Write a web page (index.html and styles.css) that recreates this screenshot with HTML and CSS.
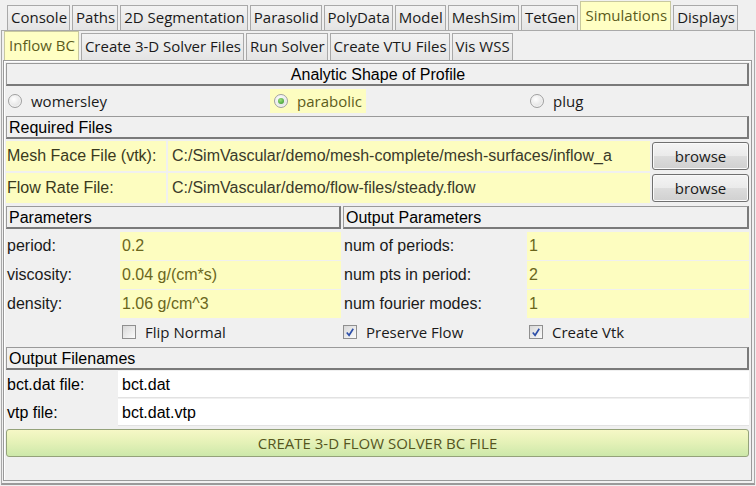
FILE: index.html
```html
<!DOCTYPE html>
<html>
<head>
<meta charset="utf-8">
<link rel="stylesheet" href="styles.css">
</head>
<body>
<div class="app">
  <div class="tabs main">
    <div class="tab">Console</div>
    <div class="tab">Paths</div>
    <div class="tab">2D Segmentation</div>
    <div class="tab">Parasolid</div>
    <div class="tab">PolyData</div>
    <div class="tab">Model</div>
    <div class="tab">MeshSim</div>
    <div class="tab">TetGen</div>
    <div class="tab sel">Simulations</div>
    <div class="tab">Displays</div>
  </div>
  <div class="panel">
    <div class="tabs sub">
      <div class="tab sel">Inflow BC</div>
      <div class="tab">Create 3-D Solver Files</div>
      <div class="tab">Run Solver</div>
      <div class="tab">Create VTU Files</div>
      <div class="tab">Vis WSS</div>
    </div>
    <div class="frame">
      <div class="hdr center">Analytic Shape of Profile</div>
      <div class="radios">
        <div class="opt"><span class="radio"></span>womersley</div>
        <div class="opt on"><span class="radio checked"></span>parabolic</div>
        <div class="opt"><span class="radio"></span>plug</div>
      </div>
      <div class="hdr">Required Files</div>
      <div class="filerow">
        <div class="flabel">Mesh Face File (vtk):</div>
        <div class="fvalue">C:/SimVascular/demo/mesh-complete/mesh-surfaces/inflow_a</div>
        <div class="btn">browse</div>
      </div>
      <div class="filerow">
        <div class="flabel">Flow Rate File:</div>
        <div class="fvalue">C:/SimVascular/demo/flow-files/steady.flow</div>
        <div class="btn">browse</div>
      </div>
      <div class="params">
        <div class="hdr span2">Parameters</div>
        <div class="hdr span2 rhdr">Output Parameters</div>
        <div class="plabel">period:</div><div class="pval">0.2</div>
        <div class="plabel rl">num of periods:</div><div class="pval">1</div>
        <div class="plabel">viscosity:</div><div class="pval">0.04 g/(cm*s)</div>
        <div class="plabel rl">num pts in period:</div><div class="pval">2</div>
        <div class="plabel">density:</div><div class="pval">1.06 g/cm^3</div>
        <div class="plabel rl">num fourier modes:</div><div class="pval">1</div>
        <div></div>
        <div class="chk"><span class="box"></span>Flip Normal</div>
        <div class="chk"><span class="box checked"><svg viewBox="0 0 13 13" width="13" height="13"><path d="M3 6.5 L5.5 9.5 L10 2.5" fill="none" stroke="#2d4fa8" stroke-width="1.8"/></svg></span>Preserve Flow</div>
        <div class="chk"><span class="box checked"><svg viewBox="0 0 13 13" width="13" height="13"><path d="M3 6.5 L5.5 9.5 L10 2.5" fill="none" stroke="#2d4fa8" stroke-width="1.8"/></svg></span>Create Vtk</div>
      </div>
      <div class="hdr">Output Filenames</div>
      <div class="outs">
        <div class="olabel">bct.dat file:</div><div class="oval">bct.dat</div>
        <div class="olabel">vtp file:</div><div class="oval">bct.dat.vtp</div>
      </div>
      <div class="create">CREATE 3-D FLOW SOLVER BC FILE</div>
    </div>
  </div>
</div>
</body>
</html>
```
FILE: styles.css
```css
* { box-sizing: border-box; }
html, body { margin: 0; padding: 0; }
body {
  width: 756px; height: 486px; overflow: hidden;
  background: #f0f0f0;
  font-family: "Liberation Sans", Arial, sans-serif;
  font-size: 16px; color: #000;
}
.app { display: flex; flex-direction: column; height: 486px; }
.tabs { display: flex; align-items: flex-end; gap: 2px; }
.tabs.main { padding: 0 0 0 7px; height: 30px; }
.tab {
  font-family: "Open Sans", "Noto Sans", sans-serif;
  font-size: 15px; color: #1a1a1a;
  height: 25px; line-height: 23px; padding: 0 2px 0 3px;
  border: 1px solid #a9a9a9; border-bottom: none;
  background: linear-gradient(#f3f3f3, #e4e4e4);
  white-space: nowrap;
}
.tab.sel {
  height: 29px; line-height: 27px;
  background: #ffffc4; color: #5c5c1c; padding: 0 3px 0 4px;
  border-color: #c8c8a0;
}
.panel {
  flex: 1; display: flex; flex-direction: column;
  border: 1px solid #a9a9a9; border-bottom: 2px solid #9a9a9a;
  margin: 0 1px 1px 1px; background: #f0f0f0;
}
.tabs.sub { padding: 0 0 0 2px; height: 29px; }
.tabs.sub .tab { height: 27px; line-height: 25px; }
.tabs.sub .tab.sel { height: 29px; line-height: 27px; }
.frame {
  flex: 1; margin: 0 2px 2px 1px;
  border: 1px solid #9a9a9a; box-shadow: inset 1px 1px 0 #fff;
  padding: 2px 2px 2px 2px;
  display: flex; flex-direction: column; gap: 2px;
}
.hdr {
  height: 23px; line-height: 21px; padding-left: 2px;
  border: 1px solid #8a8a8a; border-right-width: 2px; border-bottom-width: 2px;
  border-color: #9a9a9a #7a7a7a #7a7a7a #9a9a9a;
  background: #f0f0f0; white-space: nowrap;
}
.hdr.center { text-align: center; }
.radios {
  height: 26px; display: grid; grid-template-columns: 264px 258px 1fr;
  align-items: center;
}
.opt {
  font-family: "Open Sans", "Noto Sans", sans-serif; font-size: 15px; color: #1a1a1a;
  display: flex; align-items: center; gap: 9px; height: 24px; padding: 0 4px 0 2px;
  justify-self: start;
}
.opt.on { background: #fdfdc0; color: #5c5c1c; padding-left: 4px; padding-right: 4px; }
.radio {
  width: 14px; height: 14px; border-radius: 50%;
  border: 1px solid #a0a0a0;
  background: radial-gradient(circle at 40% 35%, #fff, #d6d6d6);
  box-shadow: inset 0 0 0 1px #f4f4f4;
  display: inline-block; position: relative;
}
.radio.checked::after {
  content: ""; position: absolute; left: 3px; top: 3px; width: 6px; height: 6px;
  border-radius: 50%; background: radial-gradient(circle at 40% 35%, #9be07a, #2f8f2a);
}
.filerow { height: 30px; display: flex; gap: 2px; align-items: stretch; }
.flabel { width: 160px; background: #fdfdc0; color: #3a3a1c; line-height: 30px; padding-left: 1px; white-space: nowrap; }
.fvalue { flex: 1; background: #fdfdc0; color: #3a3a2a; line-height: 30px; padding-left: 4px; white-space: nowrap; overflow: hidden; }
.btn {
  width: 97px; margin: 1px 0; border: 1px solid #707070; border-radius: 3px;
  background: linear-gradient(#f4f4f4 0%, #ebebeb 48%, #dcdcdc 52%, #d0d0d0 100%);
  box-shadow: inset 0 0 0 1px #fafafa;
  font-family: "Open Sans", "Noto Sans", sans-serif; font-size: 15px; color: #1a1a1a;
  text-align: center; line-height: 26px;
}
.params {
  display: grid; grid-template-columns: 114px 221px 186px 1fr;
  grid-template-rows: 25px 28px 28px 28px 26px; row-gap: 1px; margin-top: 1px;
}
.params .hdr { height: 23px; align-self: start; margin-bottom: 2px; }
.span2 { grid-column: span 2; }
.rhdr { margin-left: 2px; }
.plabel { line-height: 28px; padding-left: 1px; white-space: nowrap; color: #1a1a1a; }
.plabel.rl { padding-left: 3px; }
.pval { background: #fdfdc0; color: #6a661c; line-height: 28px; padding-left: 2px; }
.chk {
  font-family: "Open Sans", "Noto Sans", sans-serif; font-size: 15px; color: #1a1a1a;
  display: flex; align-items: center; gap: 9px; padding-left: 2px;
}
.box {
  width: 14px; height: 14px; border: 1px solid #8f8f8f;
  background: linear-gradient(135deg, #d8d8d8, #fbfbfb);
  display: inline-flex; align-items: center; justify-content: center;
}
.box svg { display: block; }
.outs {
  display: grid; grid-template-columns: 112px 1fr; grid-auto-rows: 27px; row-gap: 1px;
  margin-top: -1px;
}
.olabel { line-height: 27px; padding-left: 1px; }
.oval { background: #fff; line-height: 27px; padding-left: 4px; border-bottom: 1px solid #e2e2e2; }
.create {
  height: 28px; margin-top: 1px;
  border: 1px solid #94a27a; border-radius: 3px;
  background: linear-gradient(#f6f8c6 0%, #e6f2b8 45%, #cde8aa 100%);
  font-family: "Open Sans", "Noto Sans", sans-serif; font-size: 15px; color: #55551e;
  text-align: center; line-height: 26px;
}
```
